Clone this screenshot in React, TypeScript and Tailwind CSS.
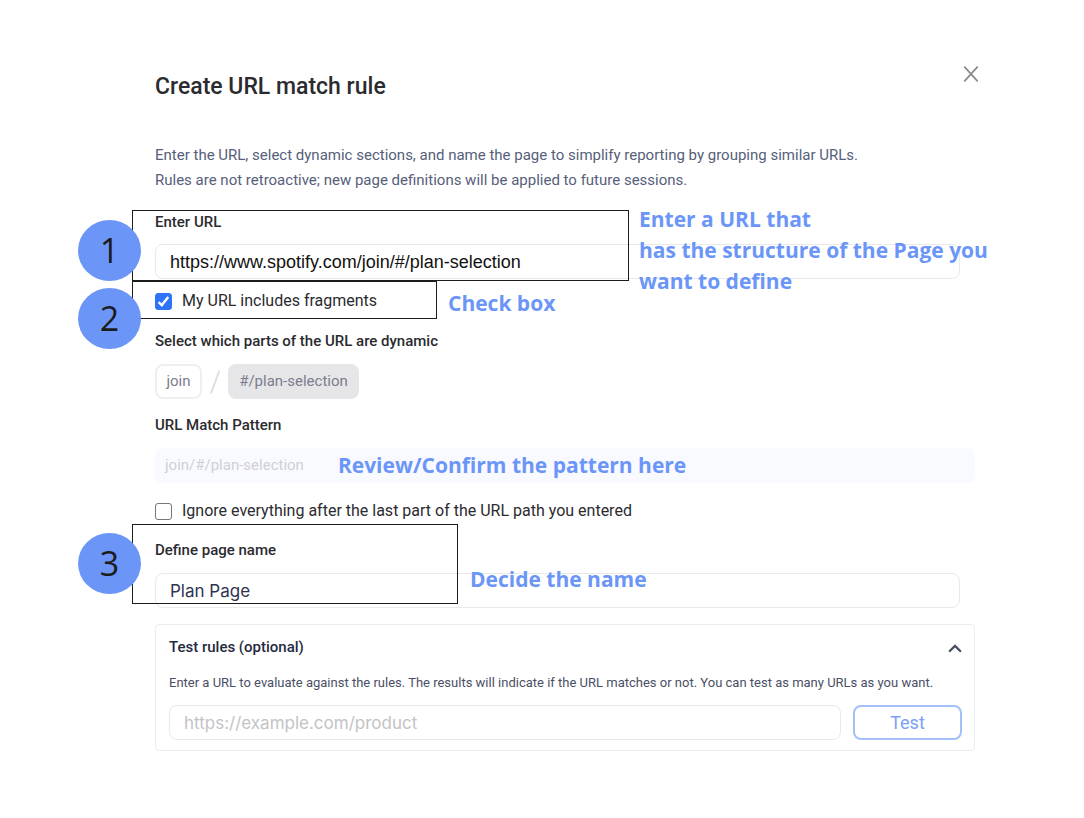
import React, { useState } from "react";

const LABEL = "block text-[15px] leading-5 font-medium text-[#2b2b2f]";
const INPUT =
  "block h-[35px] min-w-0 rounded-lg border border-[#e9e9ec] bg-white px-3.5 outline-none";
const NOTE =
  "pointer-events-none whitespace-nowrap font-['Open_Sans'] text-[21px] leading-[31px] font-bold text-[#6b96f8]";
const OUTLINE = "pointer-events-none absolute -left-[23px] border border-[#1c1c1c]";

interface StepBadgeProps {
  step: number;
  className: string;
}

function StepBadge({ step, className }: StepBadgeProps) {
  return (
    <span
      className={`pointer-events-none absolute flex h-[61px] w-[63px] items-center justify-center rounded-[50%] bg-[#6b96f8] font-['Open_Sans'] text-[34px] text-[#1c1c1c] ${className}`}
    >
      {step}
    </span>
  );
}

interface CheckRowProps {
  id: string;
  label: string;
  checked: boolean;
  onChange: (checked: boolean) => void;
}

function CheckRow({ id, label, checked, onChange }: CheckRowProps) {
  return (
    <div className="flex h-5 items-center gap-2.5">
      <span className="relative flex">
        <input
          id={id}
          type="checkbox"
          checked={checked}
          onChange={(e) => onChange(e.target.checked)}
          className="peer size-[17px] appearance-none rounded-[3px] border border-[#767676] bg-white checked:border-[#2f74f6] checked:bg-[#2f74f6]"
        />
        <svg
          viewBox="0 0 17 17"
          className="pointer-events-none absolute inset-0 hidden size-[17px] peer-checked:block"
          fill="none"
          stroke="white"
          strokeWidth="2.4"
        >
          <path d="M3.6 9.2 6.8 12.2 13.2 4" />
        </svg>
      </span>
      <label htmlFor={id} className="text-base leading-5 text-[#2b2b2f]">
        {label}
      </label>
    </div>
  );
}

function TestRules() {
  const [open, setOpen] = useState(true);

  return (
    <section className="mt-4 rounded border border-[#ececef] pt-3 pr-3 pb-2.5 pl-[13px]">
      <button
        type="button"
        aria-expanded={open}
        onClick={() => setOpen(!open)}
        className="flex w-full items-center justify-between text-[15px] leading-5 font-medium text-[#252a41]"
      >
        Test rules (optional)
        <svg
          viewBox="0 0 14 14"
          className={open ? "size-3.5 text-[#4a5062]" : "size-3.5 rotate-180 text-[#4a5062]"}
          fill="none"
          stroke="currentColor"
          strokeWidth="2.4"
          strokeLinecap="round"
        >
          <path d="M1.8 11 7 6 12.2 11" />
        </svg>
      </button>
      {open && (
        <>
          <p className="mt-4 text-[13px] leading-5 text-[#4a4f66]">
            Enter a URL to evaluate against the rules. The results will indicate if the URL
            matches or not. You can test as many URLs as you want.
          </p>
          <div className="mt-3 flex gap-3">
            <input
              type="url"
              aria-label="URL to test"
              placeholder="https://example.com/product"
              className={`${INPUT} flex-1 font-['Inter'] text-[17px] placeholder:text-[#c3c3c6]`}
            />
            <button
              type="button"
              className="h-[35px] w-[109px] rounded-lg border-2 border-[#a3c0fb] text-lg leading-5 text-[#7a9ff5]"
            >
              Test
            </button>
          </div>
        </>
      )}
    </section>
  );
}

export default function App() {
  const [url, setUrl] = useState("https://www.spotify.com/join/#/plan-selection");
  const [name, setName] = useState("Plan Page");
  const [fragments, setFragments] = useState(true);
  const [ignoreRest, setIgnoreRest] = useState(false);

  return (
    <main className="min-h-screen bg-white pt-16 pr-[109px] pb-16 pl-[155px] font-['Roboto',sans-serif]">
      <header className="flex items-start justify-between">
        <h1 className="pt-[9px] text-[23px] leading-7 font-medium text-[#2b2b2f]">
          Create URL match rule
        </h1>
        <button type="button" aria-label="Close" className="-mr-1 py-0.5">
          <svg
            viewBox="0 0 16 16"
            className="size-4"
            fill="none"
            stroke="#8a8a8a"
            strokeWidth="1.7"
          >
            <path d="M1.3.6 14.7 15.4M14.7.6 1.3 15.4" />
          </svg>
        </button>
      </header>

      <p className="mt-[42px] text-[15px] leading-[25px] text-[#56607a]">
        Enter the URL, select dynamic sections, and name the page to simplify reporting by
        grouping similar URLs.
        <br />
        Rules are not retroactive; new page definitions will be applied to future sessions.
      </p>

      <section className="relative mt-[19px] mr-[15px]">
        <label htmlFor="url" className={LABEL}>
          Enter URL
        </label>
        <input
          id="url"
          type="text"
          value={url}
          onChange={(e) => setUrl(e.target.value)}
          className={`${INPUT} mt-3 w-full pt-0.5 font-['Liberation_Sans'] text-lg text-[#111]`}
        />
        <div className={`${OUTLINE} -top-0.5 h-[71px] w-[497px]`} />
        <StepBadge step={1} className="top-2 -left-[77px]" />
        <p className={`${NOTE} absolute -top-2 left-[484px]`}>
          Enter a URL that
          <br />
          has the structure of the Page you
          <br />
          want to define
        </p>
      </section>

      <section className="relative mt-0.5 -ml-[23px] flex items-end gap-[11px]">
        <div className="flex h-[38px] w-[305px] items-center border border-[#1c1c1c] px-[22px] pt-0.5">
          <CheckRow
            id="fragments"
            label="My URL includes fragments"
            checked={fragments}
            onChange={setFragments}
          />
        </div>
        <p className={NOTE}>Check box</p>
        <StepBadge step={2} className="top-[7px] -left-[54px]" />
      </section>

      <section className="mt-3">
        <h2 className={LABEL}>Select which parts of the URL are dynamic</h2>
        <div className="mt-[13px] flex items-center gap-2 text-[15px] text-[#7b7d8c]">
          <button
            type="button"
            className="h-[35px] w-[47px] rounded-lg border-2 border-[#efeff2] bg-white"
          >
            join
          </button>
          <svg viewBox="0 0 10 24" className="h-6 w-2.5" stroke="#dfdfe2" strokeWidth="2">
            <path d="M9.4.5 1 23.5" />
          </svg>
          <button type="button" className="h-[35px] w-[131px] rounded-lg bg-[#e6e6e9]">
            #/plan-selection
          </button>
        </div>
      </section>

      <section className="mt-4">
        <h2 className={LABEL}>URL Match Pattern</h2>
        <div className="mt-[13px] flex h-[35px] items-center gap-[34px] rounded-lg bg-[#f9faff] px-2.5">
          <output className="text-[15px] text-[#cfcfd4]">join/#/plan-selection</output>
          <p className={NOTE}>Review/Confirm the pattern here</p>
        </div>
      </section>

      <section className="mt-[18px]">
        <CheckRow
          id="ignore-rest"
          label="Ignore everything after the last part of the URL path you entered"
          checked={ignoreRest}
          onChange={setIgnoreRest}
        />
      </section>

      <section className="relative mt-[19px] mr-[15px]">
        <label htmlFor="page-name" className={LABEL}>
          Define page name
        </label>
        <input
          id="page-name"
          type="text"
          value={name}
          onChange={(e) => setName(e.target.value)}
          className={`${INPUT} mt-[13px] w-full font-['Inter'] text-[17px] text-[#2f3350]`}
        />
        <div className={`${OUTLINE} -top-4 h-20 w-[326px]`} />
        <StepBadge step={3} className="-top-[7px] -left-[77px]" />
        <p className={`${NOTE} absolute top-6 left-[315px]`}>Decide the name</p>
      </section>

      <TestRules />
    </main>
  );
}
